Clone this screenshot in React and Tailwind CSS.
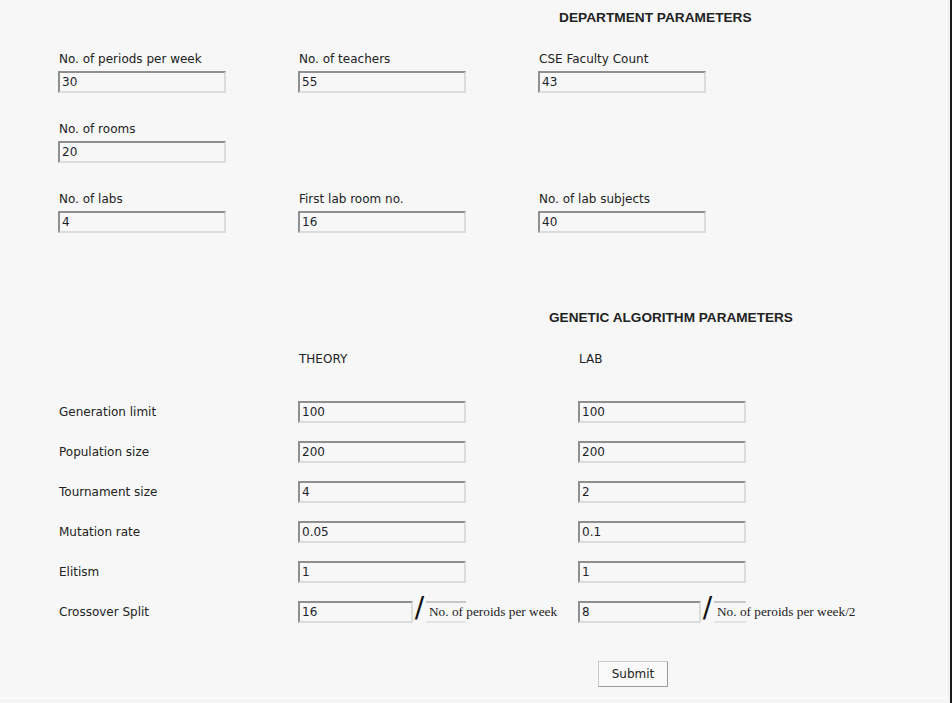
import React from "react";

const field =
  "block h-[22px] border-2 border-t-[#8f8f8f] border-l-[#8f8f8f] border-r-[#dcdcdc] border-b-[#dcdcdc] bg-[#f7f7f7] px-[2px] text-[12px] leading-[18px] text-[#1b1f2a] outline-none";

function Field({ label, value }) {
  return (
    <div className="flex flex-col">
      <label className="h-[13px] leading-[13px] mt-[1px] mb-[5px] pl-[1px] text-[12px] text-[#222]">{label}</label>
      <input className={`${field} w-[168px]`} defaultValue={value} />
    </div>
  );
}

function Cell({ value, w = "w-[168px]" }) {
  return <input className={`${field} ${w}`} defaultValue={value} />;
}

const gaRows = [
  ["Generation limit", "100", "100"],
  ["Population size", "200", "200"],
  ["Tournament size", "4", "2"],
  ["Mutation rate", "0.05", "0.1"],
  ["Elitism", "1", "1"],
];

function Split({ value, w, boxW, text }) {
  return (
    <div className="flex items-center">
      <input className={`${field} ${w}`} defaultValue={value} />
      <span className="w-[13px] text-center text-[28px] leading-[22px] font-['DejaVu_Sans',sans-serif] text-[#111] -mt-[8px]">/</span>
      <div className={`${boxW} h-[22px] border-t-2 border-b-2 border-t-[#c8c8c8] border-b-[#e4e4e4] whitespace-nowrap pl-[3px] font-['Liberation_Serif',serif] text-[13.3px] leading-[18px] text-[#222]`}>
        {text}
      </div>
    </div>
  );
}

export default function App() {
  return (
    <div className="w-[952px] h-[703px] bg-[#f4f4f4] flex font-['DejaVu_Sans',sans-serif]">
      <div className="w-[947px] h-[699px] bg-[#f7f7f7] border-r border-b border-white flex flex-col">
        <h2 className="pt-[10px] pl-[559px] h-[23px] text-[13.7px] leading-[15px] font-bold font-['Liberation_Sans',sans-serif] text-[#222]">
          DEPARTMENT PARAMETERS
        </h2>

        <div className="pl-[58px] pt-[29px] flex flex-col gap-[29px]">
          <div className="grid grid-cols-[240px_240px_240px]">
            <Field label="No. of periods per week" value="30" />
            <Field label="No. of teachers" value="55" />
            <Field label="CSE Faculty Count" value="43" />
          </div>
          <div className="grid grid-cols-[240px_240px_240px]">
            <Field label="No. of rooms" value="20" />
          </div>
          <div className="grid grid-cols-[240px_240px_240px]">
            <Field label="No. of labs" value="4" />
            <Field label="First lab room no." value="16" />
            <Field label="No. of lab subjects" value="40" />
          </div>
        </div>

        <h2 className="mt-[77px] pl-[549px] h-[15px] text-[13.6px] leading-[15px] font-bold font-['Liberation_Sans',sans-serif] text-[#222]">
          GENETIC ALGORITHM PARAMETERS
        </h2>

        <div className="mt-[28px] pl-[59px] grid grid-cols-[240px_280px_auto] text-[12px] text-[#222] h-[13px] leading-[13px]">
          <span></span>
          <span>THEORY</span>
          <span>LAB</span>
        </div>

        <div className="mt-[35px] pl-[58px] flex flex-col gap-[18px]">
          {gaRows.map(([l, t, b]) => (
            <div key={l} className="grid grid-cols-[240px_280px_auto] items-center">
              <span className="pl-[1px] text-[12px] text-[#222]">{l}</span>
              <Cell value={t} />
              <Cell value={b} />
            </div>
          ))}
          <div className="grid grid-cols-[240px_280px_auto] items-center">
            <span className="pl-[1px] text-[12px] text-[#222]">Crossover Split</span>
            <Split value="16" w="w-[115px]" boxW="w-[40px]" text="No. of peroids per week" />
            <Split value="8" w="w-[123px]" boxW="w-[32px]" text="No. of peroids per week/2" />
          </div>
        </div>

        <div className="mt-[38px] pl-[598px]">
          <button className="w-[70px] h-[26px] border border-[#c9c9c9] border-r-[#9a9a9a] border-b-[#9a9a9a] bg-[#f9f9f9] text-[12px] text-[#222]">
            Submit
          </button>
        </div>
      </div>
      <div className="ml-auto w-[2px] h-full bg-[#1a1a1a]"></div>
    </div>
  );
}
